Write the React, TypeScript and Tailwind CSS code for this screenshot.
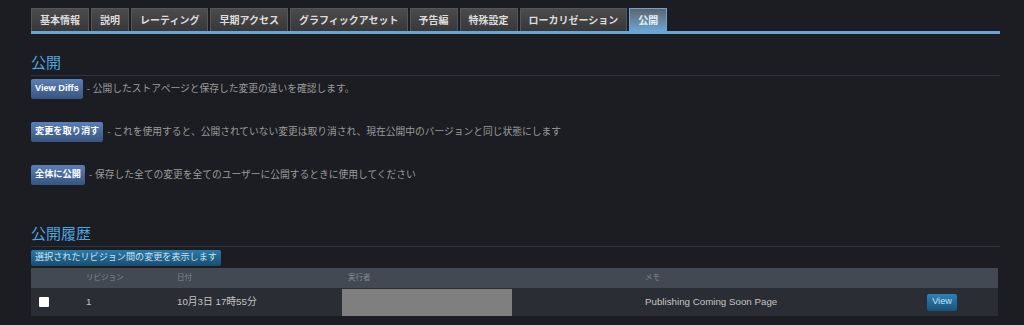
import React from 'react';

const tabs = ['基本情報', '説明', 'レーティング', '早期アクセス', 'グラフィックアセット', '予告編', '特殊設定', 'ローカリゼーション', '公開'];

const font = { fontFamily: '"Liberation Sans", "Noto Sans CJK JP", sans-serif' };

const ActionRow = ({ label, desc }: { label: string; desc: string }) => (
  <div className="flex items-center">
    <span className="h-[20px] px-1 flex items-center rounded-[2px] bg-gradient-to-b from-[#5b7fb8] to-[#37557f] text-white text-[9.2px] font-bold">
      {label}
    </span>
    <span className="ml-[4px] text-[9.75px] text-[#9b9b9b]">- {desc}</span>
  </div>
);

export default function App() {
  return (
    <div className="w-[1024px] h-[325px] bg-[#1b1d22] pl-[31px] pr-[24px] pt-[8px] overflow-hidden" style={font}>
      {/* Tabs */}
      <div className="flex gap-[2px] items-end">
        {tabs.map((t, i) => {
          const active = i === tabs.length - 1;
          return (
            <div
              key={t}
              className={
                active
                  ? 'h-[23px] px-2 flex items-center border border-b-0 border-[#67a5d6] bg-gradient-to-b from-[#5f646b] to-[#6aa6d6] text-[#e6f2fb] text-[10px] font-bold'
                  : 'h-[23px] px-2 flex items-center border border-b-0 border-[#565656] bg-gradient-to-b from-[#4b4b4b] to-[#383838] text-[#dcdcdc] text-[10px] font-bold'
              }
            >
              {t}
            </div>
          );
        })}
      </div>
      <div className="h-[3px] bg-[#67a5d6]" />

      {/* 公開 */}
      <div className="mt-[19px] text-[15px] leading-[20px] text-[#4ba6e0]">公開</div>
      <div className="h-[1px] bg-[#303339] mt-[2px]" />
      <div className="mt-[3px] flex flex-col gap-[23px]">
        <ActionRow label="View Diffs" desc="公開したストアページと保存した変更の違いを確認します。" />
        <ActionRow label="変更を取り消す" desc="これを使用すると、公開されていない変更は取り消され、現在公開中のバージョンと同じ状態にします" />
        <ActionRow label="全体に公開" desc="保存した全ての変更を全てのユーザーに公開するときに使用してください" />
      </div>

      {/* 公開履歴 */}
      <div className="mt-[39px] text-[15px] leading-[20px] text-[#4ba6e0]">公開履歴</div>
      <div className="h-[1px] bg-[#303339] mt-[2px]" />
      <div className="mt-[3px] flex">
        <span className="h-[16px] px-1 flex items-center rounded-[2px] bg-gradient-to-b from-[#2b7aa8] to-[#1b4d6e] text-[#c8e4f5] text-[9.1px]">
          選択されたリビジョン間の変更を表示します
        </span>
      </div>
      <div className="mt-[2px] w-[967px]">
        <div className="grid grid-cols-[55px_91px_165px_303px_282px_1fr] h-[20px] items-center bg-[#434952] text-[7.5px] text-[#7f8893]">
          <div />
          <div>リビジョン</div>
          <div>日付</div>
          <div className="pl-[6px]">実行者</div>
          <div>メモ</div>
          <div />
        </div>
        <div className="grid grid-cols-[55px_91px_165px_303px_282px_1fr] h-[28px] items-center bg-[#2a2d33] text-[9.75px] text-[#c4c4c4]">
          <div className="pl-[8px]">
            <div className="w-[10px] h-[10px] bg-white rounded-[1px]" />
          </div>
          <div>1</div>
          <div>10月3日 17時55分</div>
          <div className="self-end h-[27px] w-[170px] bg-[#7f7f7f]" />
          <div>Publishing Coming Soon Page</div>
          <div>
            <span className="inline-flex h-[17px] w-[30px] items-center justify-center rounded-[2px] bg-gradient-to-b from-[#2c83b6] to-[#1a5379] text-[9.2px] text-[#c6e3f6]">
              View
            </span>
          </div>
        </div>
      </div>
    </div>
  );
}
